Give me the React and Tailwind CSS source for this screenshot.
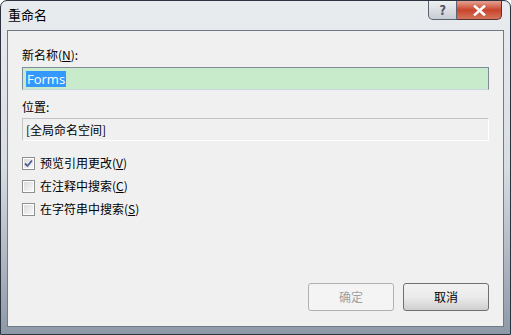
import React from 'react';

const font = { fontFamily: '"Noto Sans CJK SC", "Noto Sans", sans-serif' };

const CheckBox = ({ checked }) => (
  <div className="w-[13px] h-[13px] border border-[#8f8f8f] bg-white p-[1px]">
    <div className="w-full h-full bg-gradient-to-br from-[#dcdcdc] to-[#f8f8f8] flex items-center justify-center">
      {checked && (
        <svg width="9" height="9" viewBox="0 0 9 9">
          <path d="M1 4.5 L3.5 7 L8 1.5" fill="none" stroke="#4a5f97" strokeWidth="1.8" />
        </svg>
      )}
    </div>
  </div>
);

const Option = ({ checked, label, hotkey }) => (
  <div className="flex items-center gap-[5px] h-[16px]">
    <CheckBox checked={checked} />
    <span className="text-[12px] leading-[16px] text-black">
      {label}(<span className="underline">{hotkey}</span>)
    </span>
  </div>
);

export default function App() {
  return (
    <div
      className="w-[511px] h-[335px] flex flex-col rounded-t-[7px] border border-[#2d3440] bg-gradient-to-b from-[#e9ecef] via-[#d8dde3] to-[#8e99a8] overflow-hidden"
      style={font}
    >
      {/* title bar */}
      <div className="h-[29px] flex items-start justify-between pl-[7px] pr-[8px]">
        <div className="pt-[6px] text-[13px] leading-[16px] text-black">重命名</div>
        <div className="flex">
          <div className="w-[29px] h-[19px] border border-t-0 border-[#5b6270] rounded-bl-[5px] bg-gradient-to-b from-[#eef0f3] to-[#c7ccd3] flex items-center justify-center text-[13px] font-bold text-[#4a4f58]">
            ?
          </div>
          <div className="w-[45px] h-[19px] border border-t-0 border-l-0 border-[#5b3030] rounded-br-[5px] bg-gradient-to-b from-[#e4a190] via-[#c9442b] to-[#d2745c] flex items-center justify-center">
            <svg width="13" height="11" viewBox="0 0 13 11">
              <path d="M2 1.5 L11 9.5 M11 1.5 L2 9.5" stroke="#ffffff" strokeWidth="2.6" strokeLinecap="square" />
            </svg>
          </div>
        </div>
      </div>

      {/* client area */}
      <div className="mx-[6px] mb-[7px] flex-1 flex flex-col border border-[#6f7a88] bg-[#f0f0f0] pl-[14px] pr-[14px] pt-[16px] pb-[15px]">
        <div className="text-[12px] leading-[16px] text-black">
          新名称(<span className="underline">N</span>):
        </div>
        <div className="mt-[4px] h-[23px] border border-[#7f8b99] border-b-[#c8d6e0] bg-[#c8ebcc] flex items-center pl-[3px]">
          <span className="bg-[#3399ff] text-white text-[13px] leading-[16px] px-[1px]" style={{ fontFamily: '"Open Sans", sans-serif' }}>
            Forms
          </span>
        </div>

        <div className="mt-[9px] text-[12px] leading-[16px] text-black">位置:</div>
        <div className="mt-[3px] h-[23px] border border-[#c4c4c4] border-b-white border-r-white bg-[#f0f0f0] flex items-center pl-[3px] text-[12px] text-black">
          [全局命名空间]
        </div>

        <div className="mt-[14px] flex flex-col gap-[7px]">
          <Option checked label="预览引用更改" hotkey="V" />
          <Option label="在注释中搜索" hotkey="C" />
          <Option label="在字符串中搜索" hotkey="S" />
        </div>

        <div className="flex-1" />

        <div className="flex justify-end gap-[9px]">
          <div className="w-[86px] h-[28px] rounded-[3px] border border-[#adb2b5] bg-[#f4f4f4] flex items-center justify-center text-[12px] text-[#a0a0a0]">
            确定
          </div>
          <div className="w-[86px] h-[28px] rounded-[3px] border border-[#707070] bg-gradient-to-b from-[#f2f2f2] via-[#ebebeb] to-[#cfcfcf] flex items-center justify-center text-[12px] text-black">
            取消
          </div>
        </div>
      </div>
    </div>
  );
}
